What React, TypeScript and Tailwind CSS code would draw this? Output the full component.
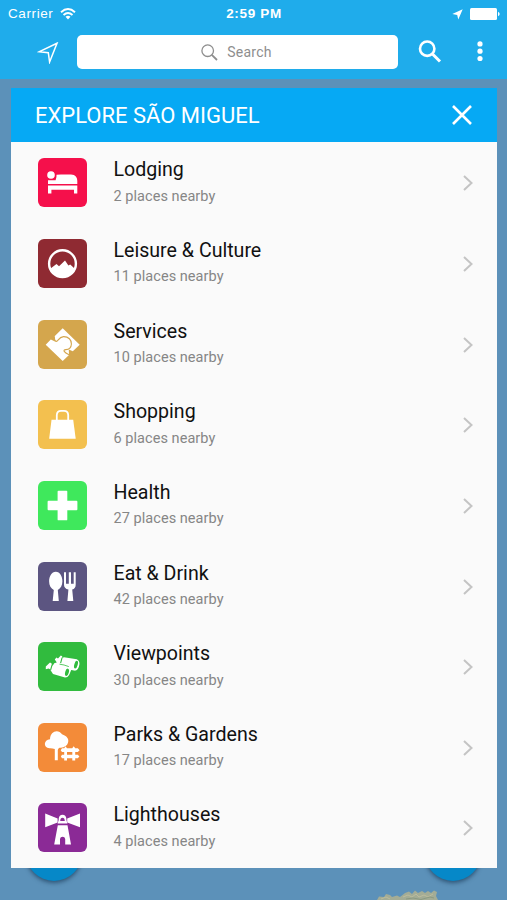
import type { ReactNode } from "react";

const bg = "#ffffff";

const icons: Record<string, ReactNode> = {
  lodging: (
    <g fill={bg}>
      <circle cx="13" cy="17" r="3.8" />
      <path d="M18.5 16.8Q21 16.3 24 16.4H33C37.5 16.6 39.3 19.5 39.3 23V26H10V22.2H17.6Q18.8 19.5 18.5 16.8Z" />
      <path d="M10 27.4H39.3V35.6H36V31.8H13.4V35.6H10Z" />
    </g>
  ),
  culture: (
    <g>
      <circle cx="24.5" cy="24.7" r="13.4" fill="none" stroke={bg} strokeWidth="2.4" />
      <path d="M12.5 29.5L18.5 25L21 27.2L27 21.5L30.4 26.5L32.2 25.5L36.8 29.8Q33.5 37.5 24.5 38Q16 37.5 12.5 29.5Z" fill={bg} />
    </g>
  ),
  services: (
    <g>
      <path d="M24.7 8.3L41.7 24.7L34.8 31.3L30.8 29.6L31 35L24.7 41L7.7 24.7L12.8 19.4L17 21.4L16.6 16.2Z" fill={bg} strokeLinejoin="round" />
      <path d="M16.2 16.6Q16.5 21.3 18.4 21.4C20.3 21.4 20.5 17 25.5 16.6C30.5 16.5 33.6 20 33.4 24C33.2 28 30.5 29.5 27.8 29.6Q25.4 29.8 26.2 31.4Q27.2 33 31 34.7" fill="none" stroke="#d4a64d" strokeWidth="1.1" />
    </g>
  ),
  shopping: (
    <g>
      <path d="M13.5 19.7H35.2L37.7 38.8H11.2Z" fill={bg} />
      <path d="M18.8 21V15Q19 10.8 23 10.8H26Q30 10.8 30.2 15V21" fill="none" stroke={bg} strokeWidth="1.8" />
    </g>
  ),
  health: (
    <path d="M20.5 9.8H28.5Q29.3 9.8 29.3 10.6V19.8H38.5Q39.4 19.8 39.4 20.7V28.2Q39.4 29.2 38.5 29.2H29.3V38.4Q29.3 39.3 28.5 39.3H20.5Q19.6 39.3 19.6 38.4V29.2H10.5Q9.6 29.2 9.6 28.2V20.7Q9.6 19.8 10.5 19.8H19.6V10.6Q19.6 9.8 20.5 9.8Z" fill={bg} />
  ),
  food: (
    <g fill={bg}>
      <path d="M17.8 9.8C22 9.8 24.4 14.5 24.4 19.3C24.4 23.6 22.5 26.5 19.8 28L20.8 39H14.7L15.8 28C13 26.5 11.1 23.6 11.1 19.3C11.1 14.5 13.6 9.8 17.8 9.8Z" />
      <path d="M26 10.2H28V21.8H30.8V10.2H33V21.8H35.7V10.2H37.7V22.5Q37.7 26.7 34.2 27.6L35.3 39H29.4L30.4 27.6Q26 26.7 26 22.5Z" />
    </g>
  ),
  viewpoints: (
    <g>
      <path d="M16.8 17.6L18.4 15.4L20 16.6L22.8 13.4L24.2 14.2V16L26 15.2L38.8 17.2Q42 18.8 41.4 22.6C40.8 26.8 39 29 36 28.6L33.2 28L31.6 32Q30 35.6 27 35.6L15 32L13.4 29.4L12 27.2L10.6 26.4L7.8 27.2V24.4L12 20.6L13.6 21.4L14.6 24L16.2 21.2L18.8 20.6Z" fill={bg} />
      <ellipse cx="38" cy="22.6" rx="1.7" ry="4" transform="rotate(15 38 22.6)" fill="#31bb3e" />
      <ellipse cx="29" cy="30.3" rx="1.8" ry="3.8" transform="rotate(15 29 30.3)" fill="#31bb3e" />
      <path d="M14.2 22.4L12.6 28M24.1 15.6L22.6 21.2" fill="none" stroke="#31bb3e" strokeWidth="1.1" />
      <path d="M21.5 22.2Q26 22.6 30.8 24.6" fill="none" stroke="#31bb3e" strokeWidth="0.8" />
    </g>
  ),
  parks: (
    <g fill={bg}>
      <path d="M11.5 25.3C5 25.1 5.5 16.5 12 16.3C12.2 7.8 20.5 5.8 24 11.3C28.5 12.8 31.5 16 29.9 20C28 25 23 24.4 21 24.9Q20 25.6 19.8 27V37.3H16.8V26Q13.5 25 11.5 25.3Z" />
      <path d="M24 25.3H26.2L27.5 23.3L29 25.3H34.2L35.7 23.3L37.2 25.3H39.8L41.6 27.2L39.8 29H37.2V31.8H39.8L41.4 33.5L39.8 35.3H37.2V37.4H34.3V35.3H29V37.4H26.2V35.3H24L22.9 33.5L24 31.8H26.2V29H24L22.7 27.2ZM29 29V31.8H34.3V29Z" fillRule="evenodd" />
    </g>
  ),
  lighthouses: (
    <g>
      <path d="M7.2 10.4L19.6 15.4V19.5L7.2 24.2ZM42 10.4L29.2 15.4V19.5L42 24.2Z" fill={bg} />
      <path d="M20.7 17V15.8Q21.2 11.7 24.5 11.7Q27.9 11.7 28.4 15.8V17L29.4 20.6H19.6L20.7 17ZM19.8 22.3H29.5L33 41.5H27.2V36Q26.8 33.7 24.7 33.7Q22.3 33.7 22 36V41.5H16.2Z" fill={bg} />
      <path d="M22.2 18Q22.4 14.8 24.5 14.8Q26.6 14.8 26.8 18Z" fill="#8b2a96" />
    </g>
  ),
};

const rows = [
  { id: "lodging", title: "Lodging", count: 2, color: "bg-[#f5104b]" },
  { id: "culture", title: "Leisure & Culture", count: 11, color: "bg-[#8f2a32]" },
  { id: "services", title: "Services", count: 10, color: "bg-[#d4a64d]" },
  { id: "shopping", title: "Shopping", count: 6, color: "bg-[#f3c04f]" },
  { id: "health", title: "Health", count: 27, color: "bg-[#3fe85c]" },
  { id: "food", title: "Eat & Drink", count: 42, color: "bg-[#5c5581]" },
  { id: "viewpoints", title: "Viewpoints", count: 30, color: "bg-[#31bb3e]" },
  { id: "parks", title: "Parks & Gardens", count: 17, color: "bg-[#f38b39]" },
  { id: "lighthouses", title: "Lighthouses", count: 4, color: "bg-[#8b2a96]" },
];

function StatusBar() {
  return (
    <div className="grid h-7 grid-cols-3 items-center pr-[7px] pl-[8px] text-[13.5px] leading-none text-white">
      <div className="flex items-center gap-[7px]">
        <span className="tracking-[0.6px]">Carrier</span>
        <svg width="16" height="12" viewBox="0 0 16 12" fill="none" stroke="white" strokeWidth="1.9">
          <path d="M1 4.2Q8-2 15 4.2M3.5 7Q8 3 12.5 7" />
          <path d="M5.5 8.7Q8 6.7 10.5 8.7L8 11.4Z" fill="white" stroke="none" />
        </svg>
      </div>
      <span className="text-center text-[13.5px] font-bold tracking-[0.65px]">2:59 PM</span>
      <div className="flex items-center justify-end gap-[7px]">
        <svg width="11" height="11" viewBox="0 0 11 11">
          <path d="M10.7.3L6.3 10.5L5.2 5.9L.3 5Z" fill="white" />
        </svg>
        <svg width="30" height="12" viewBox="0 0 30 12" fill="white">
          <rect width="27" height="12" rx="1.5" />
          <path d="M28 3.8Q29.7 4.5 29.7 6Q29.7 7.5 28 8.2Z" />
        </svg>
      </div>
    </div>
  );
}

export default function App() {
  return (
    <div className="relative h-[900px] w-[507px] overflow-hidden bg-[#5c91b9] font-['Roboto','Liberation_Sans',sans-serif]">
      <div className="absolute top-[825px] left-[26px] size-[56px] rounded-full bg-[#0688c8] shadow-[0_2px_4px_rgba(20,50,80,0.65)]" />
      <div className="absolute top-[825px] left-[425px] size-[56px] rounded-full bg-[#0688c8] shadow-[0_2px_4px_rgba(20,50,80,0.65)]" />
      <svg className="absolute top-[888px] left-[376px]" width="64" height="12" viewBox="0 0 64 12">
        <path d="M1 12L3 8.5L8 9L10 6L14 7L16 9L21 7.5L24 9L29 5L33 3.5L36 6L39 2.5L42 5L46 3L49 5L52 3L55 5L58 2.5L61 4L60 8L62 12Z" fill="#a3ac96" />
        <path d="M5 11L10 9L14 11M27 9L32 7L36 9L40 6L43 9L48 7L52 9L57 6" fill="none" stroke="#bcbc9c" strokeWidth="1" />
        <path d="M30 11L37 10L45 11.5L54 9L58 10" fill="none" stroke="#8b9a82" strokeWidth="1" />
      </svg>

      <header className="h-[79px] bg-[#1faceb] font-['Liberation_Sans',sans-serif]">
        <StatusBar />
        <div className="flex h-[48px] items-center">
          <svg className="mt-[2px] ml-[37px]" width="22" height="22" viewBox="0 0 22 22" fill="none" stroke="white" strokeWidth="1.5">
            <path d="M20 1.3L2 9.8L11.3 10.7L12.6 20Z" />
          </svg>
          <div className="ml-[18px] flex h-[34px] w-[321px] items-center justify-center rounded-[5px] bg-white pr-[2px] font-['Roboto',sans-serif] text-[14px] tracking-[0.25px] text-[#8e8e8e]">
            <svg className="mr-[9px]" width="17" height="17" viewBox="0 0 17 17" fill="none" stroke="#8e8e8e" strokeWidth="1.3">
              <circle cx="6.7" cy="6.7" r="5.8" />
              <path d="M10.8 10.8L16 16" strokeWidth="1.8" />
            </svg>
            Search
          </div>
          <svg className="ml-[20px]" width="24" height="24" viewBox="0 0 24 24" fill="none" stroke="white" strokeWidth="2.6">
            <circle cx="9.2" cy="8.7" r="7.2" />
            <path d="M14.5 14L22 21.5" strokeWidth="3" />
          </svg>
          <svg className="ml-[35px]" width="6" height="22" viewBox="0 0 6 22" fill="white">
            <circle cx="3" cy="2.9" r="2.6" />
            <circle cx="3" cy="10.2" r="2.6" />
            <circle cx="3" cy="17.5" r="2.6" />
          </svg>
        </div>
      </header>

      <main className="relative mt-[9.3px] ml-[10.5px] h-[780px] w-[486.5px] bg-[#fafafa]">
        <div className="flex h-[54px] items-center justify-between bg-[#06a9f4] pr-[25.5px] pl-[24.5px] text-white">
          <h1 className="pt-px text-[22px] leading-none">EXPLORE SÃO MIGUEL</h1>
          <svg width="20" height="20" viewBox="0 0 20 20" fill="none" stroke="white" strokeWidth="2.6">
            <path d="M1 1L19 19M19 1L1 19" />
          </svg>
        </div>
        <ul>
          {rows.map((row) => (
            <li key={row.id} className="flex h-[80.65px] items-start pt-4 pl-[27px]">
              <div className={`size-[49px] shrink-0 rounded-[6px] ${row.color}`}>
                <svg width="49" height="49" viewBox="0 0 49 49">{icons[row.id]}</svg>
              </div>
              <div className="ml-[27px] flex-1">
                <div className="text-[19.6px] leading-6 text-[#111]">{row.title}</div>
                <div className="mt-[5.5px] text-[14.5px] leading-[18px] tracking-[0.05px] text-[#868686]">{row.count} places nearby</div>
              </div>
              <svg className="mt-[17px] mr-[23px]" width="12" height="16" viewBox="0 0 12 16" fill="none" stroke="#c4c4c4" strokeWidth="2">
                <path d="M2 1L9.5 8L2 15" />
              </svg>
            </li>
          ))}
        </ul>
      </main>
    </div>
  );
}
